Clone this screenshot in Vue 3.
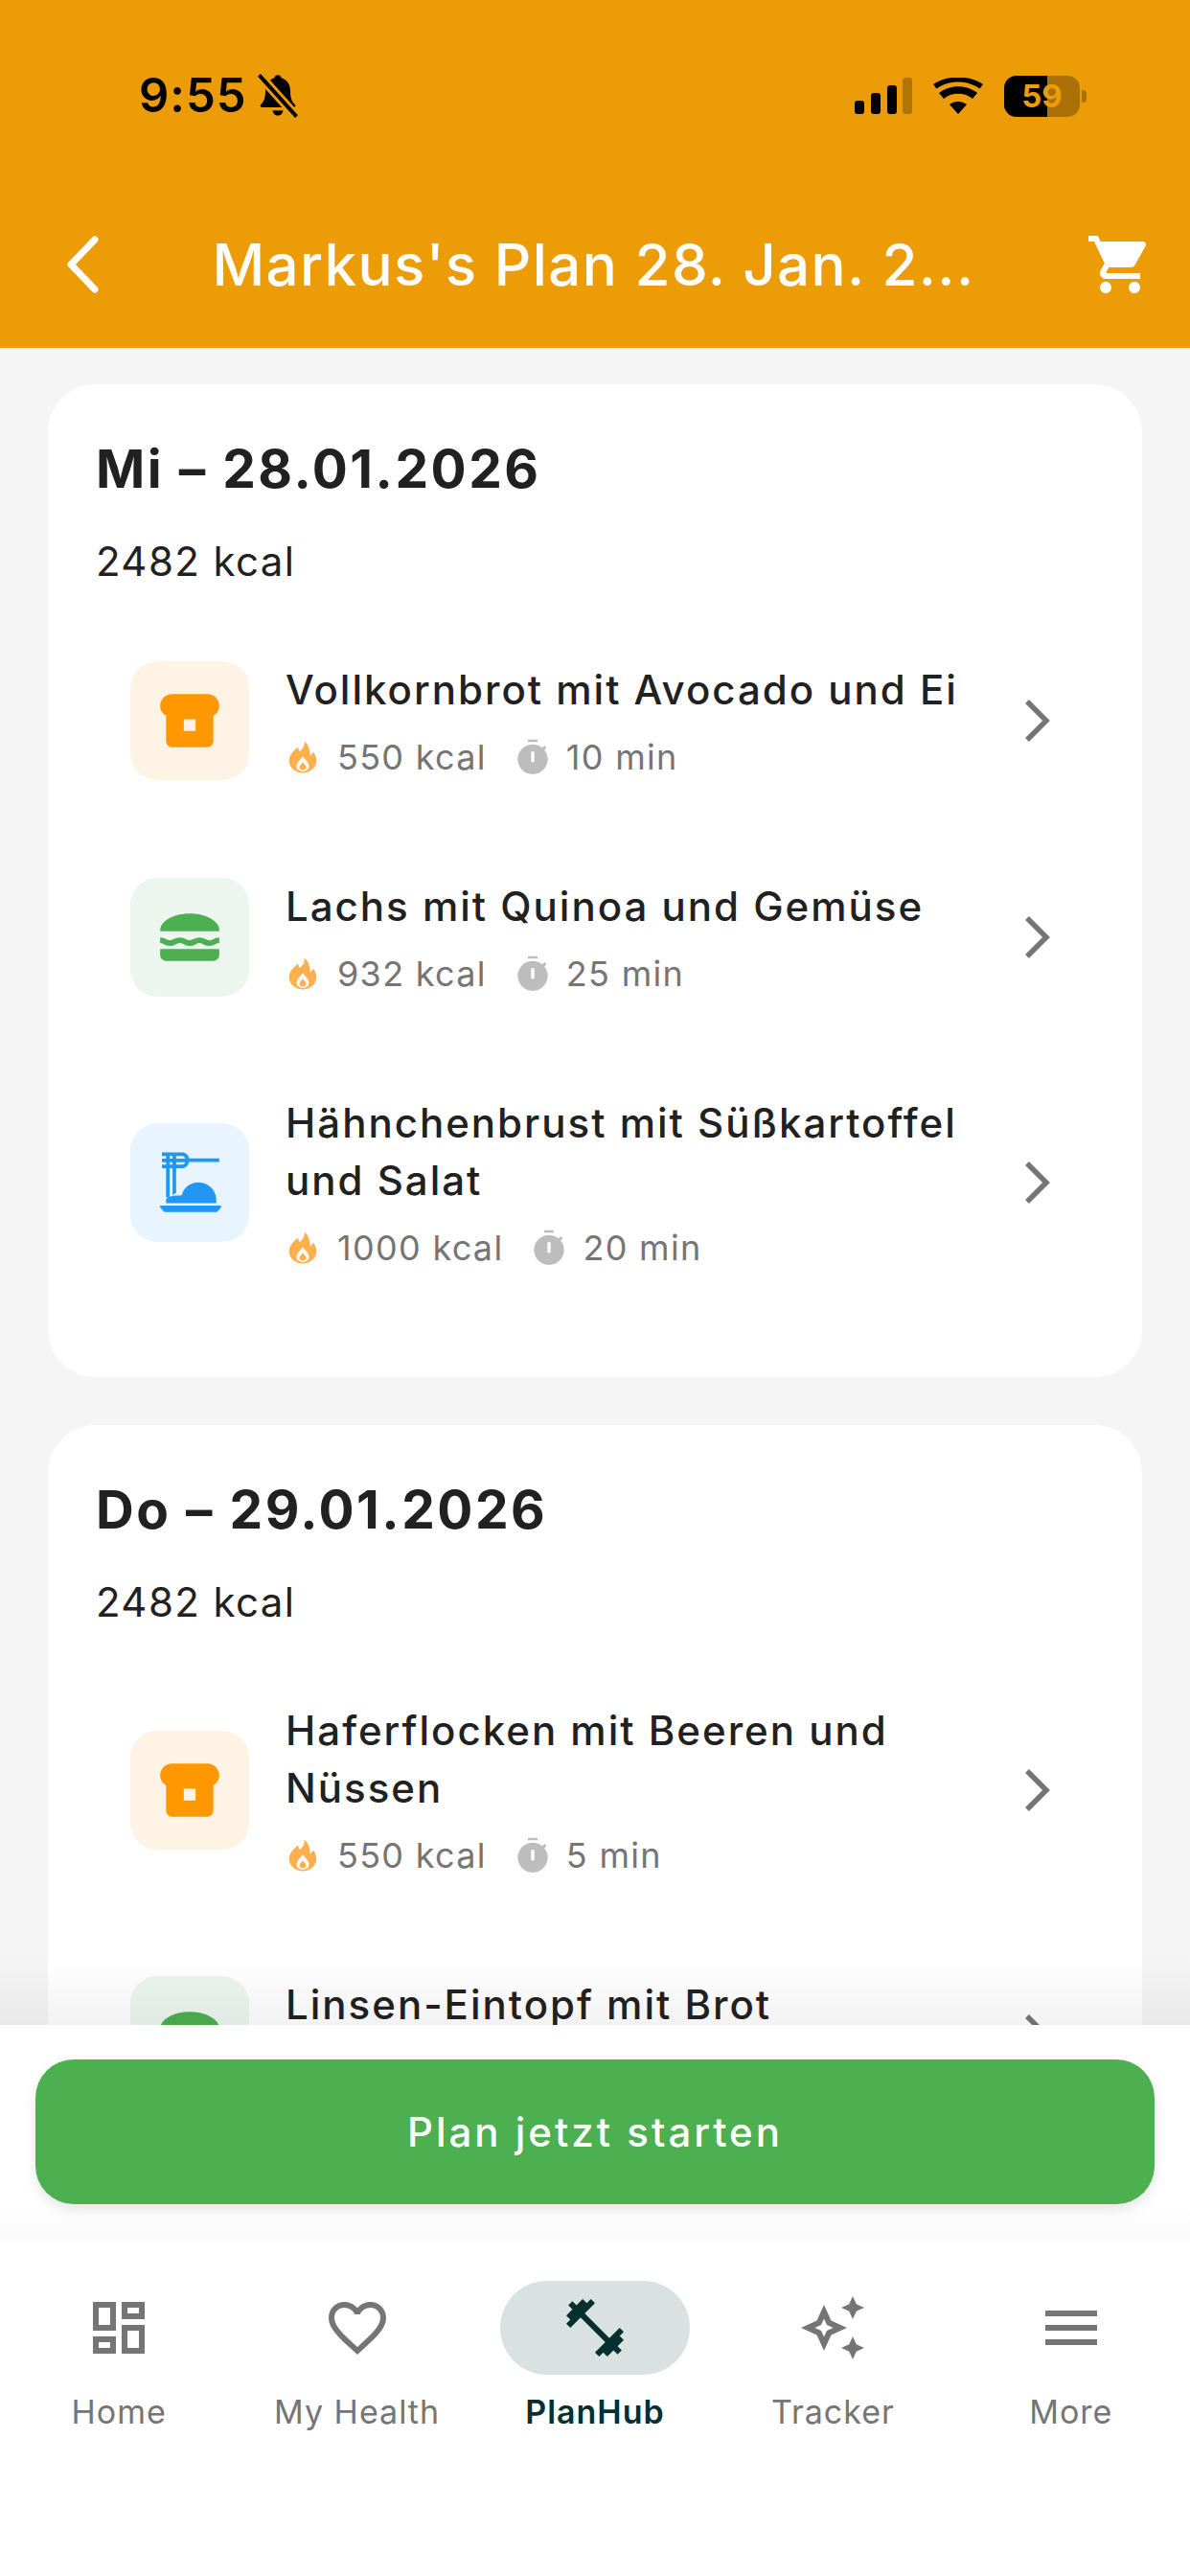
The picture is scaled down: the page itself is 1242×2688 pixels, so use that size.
<template>
  <div class="screen">
    <div class="top-bar">
      <div class="status-bar">
        <div class="status-left">
          <span class="clock">9:55</span>
          <svg class="bell" viewBox="0 0 24 24">
            <path d="M12 2c-.9 0-1.500.6-1.600 1.400C7.600 4.200 6 6.600 6 9.600c0 3.400-.6 5-2.200 6.600-.5.5-.2 1.300.5 1.300h15.400c.7 0 1-.8.5-1.300C18.600 14.600 18 13 18 9.600c0-3-1.600-5.400-4.400-6.200C13.500 2.600 12.900 2 12 2z" />
            <path d="M9.500 19c.2 1.500 1.200 2.500 2.500 2.500s2.300-1 2.500-2.500z" />
            <path class="bell-cut" d="M3 2l18 20" />
            <path class="bell-slash" d="M3 2l18 20" />
          </svg>
        </div>
        <div class="status-right">
          <svg class="signal" viewBox="0 0 60 38">
            <rect x="0" y="24" width="10" height="14" rx="3" />
            <rect x="17" y="16" width="10" height="22" rx="3" />
            <rect x="34" y="8" width="10" height="30" rx="3" />
            <rect class="dim" x="50" y="0" width="10" height="38" rx="3" />
          </svg>
          <svg class="wifi" viewBox="0 0 52 38">
            <path d="M26 38l-9-10c5-4 13-4 18 0z" />
            <path d="M11 21l-5-6c11-9 29-9 40 0l-5 6c-8-7-22-7-30 0z" transform="translate(0 1)" />
            <path d="M3.500 11.500L0 7c14-10 38-10 52 0l-3.500 4.500C36 2 16 2 3.500 11.500z" />
          </svg>
          <div class="battery">
            <div class="battery-level"></div>
            <span class="battery-num">59</span>
            <div class="battery-cap"></div>
          </div>
        </div>
      </div>
      <div class="nav-row">
        <svg class="back" viewBox="0 0 40 64"><path d="M33 6L8 32l25 26" /></svg>
        <span class="page-title">Markus's Plan 28. Jan. 2...</span>
        <svg class="cart" viewBox="0 0 24 24">
          <path d="M7 18c-1.100 0-1.990.9-1.990 2S5.900 22 7 22s2-.9 2-2-.9-2-2-2zM1 2v2h2l3.600 7.590-1.350 2.450c-.16.28-.25.61-.25.96 0 1.100.9 2 2 2h12v-2H7.420c-.14 0-.25-.11-.25-.25l.03-.12.9-1.630h7.450c.75 0 1.410-.41 1.750-1.030l3.580-6.490c.08-.14.12-.31.12-.48 0-.55-.45-1-1-1H5.210l-.94-2H1zm16 16c-1.100 0-1.990.9-1.990 2s.89 2 1.990 2 2-.9 2-2-.9-2-2-2z" />
        </svg>
      </div>
    </div>

    <div class="scroll-area">
      <section v-for="day in days" :key="day.date" class="day-card">
        <h2 class="day-title">{{ day.date }}</h2>
        <p class="day-kcal">{{ day.kcal }} kcal</p>
        <div class="meal-list">
          <div v-for="meal in day.meals" :key="meal.name" class="meal-row">
            <div class="meal-icon" :class="meal.type">
              <svg v-if="meal.type === 'breakfast'" viewBox="0 0 24 24">
                <path fill-rule="evenodd" d="M18 3H6C3.800 3 2 4.800 2 7c0 1.500.8 2.700 2 3.400V19c0 1.100.9 2 2 2h12c1.100 0 2-.9 2-2v-8.600c1.200-.7 2-1.900 2-3.400 0-2.200-1.800-4-4-4zm-4 12.500h-4v-4h4z" />
              </svg>
              <svg v-else-if="meal.type === 'lunch'" viewBox="0 0 24 24">
                <path d="M22 10c.32-3.280-4.280-6-9.990-6C6.300 4 1.700 6.720 2.020 10z" />
                <path class="wave" d="M2 13c1.700 0 1.700 1 3.300 1s1.700-1 3.400-1 1.700 1 3.300 1 1.700-1 3.300-1 1.700 1 3.400 1 1.600-1 3.300-1" />
                <path d="M2 16h20v2c0 1.100-.9 2-2 2H4c-1.100 0-2-.9-2-2z" />
              </svg>
              <svg v-else viewBox="0 0 24 24">
                <path fill-rule="evenodd" d="M2.600 1.800h6.900c1.100 0 2 .8 2.300 2H22V5H11.800c-.3 1.200-1.200 2.100-2.300 2.100H2.600V5.900H4v-.8H2.600V3.900H4V3H2.600zM5.200 3h1v.9h-1zm0 2.100h1v.8h-1zM7.400 3h2c.6 0 1 .4 1 .9h-3zm0 2.100h3c0 .5-.4.8-1 .8h-2z" />
                <path d="M4 7.100h1.200V17H4zM6.200 7.100h1.200v8.400l-1.200.7z" />
                <path d="M4 19v-1.400c.8-.8 2-1.200 3.700-1.200.6 0 1.100 0 1.600-.1.6-2.600 2.900-4.400 5.700-4.400 3.400 0 6 2.700 6 6V19z" />
                <path d="M2 19.800h20.600v.6L21.200 22H3.400L2 20.400z" />
              </svg>
            </div>
            <div class="meal-body">
              <div class="meal-name">{{ meal.name }}</div>
              <div class="meal-meta">
                <svg class="flame" viewBox="0 0 24 24">
                  <path d="M13 1c.6 3.300-1.100 5-3 7-.8-.8-1.200-1.800-1.200-3C5 7.800 2.500 11 2.500 14.500c0 4.800 4.300 8.500 9.500 8.500s9.500-3.700 9.500-8.500c0-2.300-.9-4.400-2.200-6.100-.4 1.200-1.200 2-2.300 2.500C17.300 7.200 16 3.400 13 1z" />
                  <path class="flame-hollow" d="M12 11.500c-2 2.500-4.300 4.600-4.300 6.900 0 2 1.900 3.600 4.300 3.600s4.300-1.600 4.300-3.600c0-2.300-2.300-4.400-4.300-6.900z" />
                  <path d="M12 15.500c-1 1.300-2.300 2.300-2.300 3.500 0 1.200 1 2 2.300 2s2.300-.8 2.300-2c0-1.200-1.300-2.200-2.300-3.500z" />
                </svg>
                <span class="meta-value">{{ meal.kcal }} kcal</span>
                <svg class="stopwatch" viewBox="0 0 24 24">
                  <path fill-rule="evenodd" d="M9 1h6v1.600H9zM12 4c-5.200 0-9.400 4.200-9.400 9.400S6.800 22.800 12 22.800s9.400-4.200 9.400-9.400c0-2.200-.8-4.300-2.100-5.900l1.400-1.400-1.300-1.300-1.400 1.400C16.300 4.800 14.200 4 12 4zm-1 4.500h2v6.600h-2z" />
                </svg>
                <span class="meta-value">{{ meal.minutes }} min</span>
              </div>
            </div>
            <svg class="chevron" viewBox="0 0 30 48"><path d="M5 4l20 20L5 44" /></svg>
          </div>
        </div>
      </section>
    </div>

    <div class="action-bar">
      <button class="start-btn">Plan jetzt starten</button>
    </div>

    <nav class="tab-bar">
      <div v-for="tab in tabs" :key="tab.label" class="tab" :class="{ active: tab.active }">
        <div class="tab-icon">
          <svg viewBox="0 0 24 24"><path :d="tab.icon" /></svg>
        </div>
        <span class="tab-label">{{ tab.label }}</span>
      </div>
    </nav>
  </div>
</template>

<script setup>
const days = [
  {
    date: 'Mi – 28.01.2026',
    kcal: 2482,
    meals: [
      { name: 'Vollkornbrot mit Avocado und Ei', type: 'breakfast', kcal: 550, minutes: 10 },
      { name: 'Lachs mit Quinoa und Gemüse', type: 'lunch', kcal: 932, minutes: 25 },
      { name: 'Hähnchenbrust mit Süßkartoffel und Salat', type: 'dinner', kcal: 1000, minutes: 20 }
    ]
  },
  {
    date: 'Do – 29.01.2026',
    kcal: 2482,
    meals: [
      { name: 'Haferflocken mit Beeren und Nüssen', type: 'breakfast', kcal: 550, minutes: 5 },
      { name: 'Linsen-Eintopf mit Brot', type: 'lunch', kcal: 932, minutes: 25 }
    ]
  }
]

const tabs = [
  {
    label: 'Home',
    icon: 'M19 5v2h-4V5h4M9 5v6H5V5h4m10 8v6h-4v-6h4M9 17v2H5v-2h4M21 3h-8v6h8V3zM11 3H3v10h8V3zm10 8h-8v10h8V11zm-10 4H3v6h8v-6z'
  },
  {
    label: 'My Health',
    icon: 'M16.500 3c-1.740 0-3.410.81-4.500 2.090C10.910 3.810 9.240 3 7.500 3 4.420 3 2 5.420 2 8.500c0 3.780 3.400 6.860 8.550 11.540L12 21.350l1.450-1.320C18.600 15.360 22 12.280 22 8.500 22 5.420 19.580 3 16.500 3zm-4.400 15.550l-.1.1-.1-.1C7.140 14.240 4 11.390 4 8.500 4 6.500 5.500 5 7.500 5c1.540 0 3.040.99 3.570 2.360h1.870C13.460 5.990 14.960 5 16.500 5c2 0 3.500 1.500 3.500 3.500 0 2.890-3.140 5.740-7.900 10.050z'
  },
  {
    label: 'PlanHub',
    active: true,
    icon: 'M20.570 14.860L22 13.430 20.570 12 17 15.570 8.430 7 12 3.430 10.570 2 9.140 3.430 7.710 2 5.570 4.140 4.140 2.710 2.710 4.140l1.430 1.430L2 7.710l1.430 1.430L2 10.570 3.430 12 7 8.430 15.570 17 12 20.570 13.430 22l1.430-1.430L16.290 22l2.140-2.140 1.430 1.430 1.430-1.430-1.430-1.430L22 16.290z'
  },
  {
    label: 'Tracker',
    icon: 'M19 9l1.250-2.750L23 5l-2.750-1.250L19 1l-1.250 2.750L15 5l2.750 1.250L19 9zm-7.500.5L9 4 6.500 9.500 1 12l5.500 2.500L9 20l2.500-5.500L17 12l-5.500-2.500zM9.990 12.990L9 15.170l-.99-2.180L5.830 12l2.180-.99L9 8.830l.99 2.180 2.180.99-2.180.99zM19 15l-1.250 2.750L15 19l2.750 1.250L19 23l1.250-2.750L23 19l-2.750-1.250L19 15z'
  },
  {
    label: 'More',
    icon: 'M3 18h18v-2H3v2zm0-5h18v-2H3v2zm0-7v2h18V6H3z'
  }
]
</script>

<style>
html,
body {
  margin: 0;
  background: #f5f5f5;
}
</style>

<style scoped>
.screen {
  width: 1242px;
  height: 2688px;
  display: flex;
  flex-direction: column;
  overflow: hidden;
  background: #f5f5f5;
  font-family: Inter, "Liberation Sans", sans-serif;
}

.top-bar {
  height: 363px;
  flex: none;
  background: #ec9c07;
}

.status-bar {
  height: 202px;
  box-sizing: border-box;
  padding: 72px 115px 0 145px;
  display: flex;
  justify-content: space-between;
  align-items: flex-start;
}

.status-left {
  display: flex;
  align-items: center;
  gap: 6px;
}

.clock {
  font-size: 49px;
  line-height: 56px;
  font-weight: 600;
  letter-spacing: 1px;
  color: #000;
}

.bell {
  width: 52px;
  height: 52px;
}

.bell path {
  fill: #000;
}

.bell .bell-cut {
  fill: none;
  stroke: #ec9c07;
  stroke-width: 4.5;
}

.bell .bell-slash {
  fill: none;
  stroke: #000;
  stroke-width: 1.8;
}

.status-right {
  display: flex;
  align-items: center;
  gap: 22px;
  height: 56px;
}

.signal {
  width: 60px;
  height: 38px;
  fill: #000;
}

.signal .dim {
  opacity: 0.25;
}

.wifi {
  width: 52px;
  height: 38px;
  fill: #000;
}

.battery {
  position: relative;
  width: 79px;
  height: 43px;
  border-radius: 13px;
  background: rgba(0, 0, 0, 0.28);
}

.battery-level {
  width: 45px;
  height: 43px;
  border-radius: 13px 0 0 13px;
  background: #000;
}

.battery-num {
  position: absolute;
  left: 0;
  right: 0;
  top: 0;
  text-align: center;
  font-size: 33px;
  line-height: 43px;
  font-weight: 700;
  color: #ec9c07;
}

.battery-cap {
  position: absolute;
  right: -7px;
  top: 15px;
  width: 5px;
  height: 13px;
  border-radius: 0 4px 4px 0;
  background: rgba(0, 0, 0, 0.28);
}

.nav-row {
  height: 148px;
  display: flex;
  align-items: center;
  padding: 0 37px 0 66px;
}

.back {
  width: 40px;
  height: 64px;
  flex: none;
}

.back path {
  fill: none;
  stroke: #fff;
  stroke-width: 7;
  stroke-linecap: round;
  stroke-linejoin: round;
}

.page-title {
  flex: 1;
  text-align: center;
  font-size: 60px;
  font-weight: 500;
  letter-spacing: 1.4px;
  color: #fff;
  white-space: nowrap;
}

.cart {
  width: 72px;
  height: 72px;
  fill: #fff;
  flex: none;
}

.scroll-area {
  flex: 1;
  min-height: 0;
  overflow: hidden;
  position: relative;
  box-sizing: border-box;
  padding: 38px 50px 0;
}

/* soft shade where the list runs under the action bar */
.scroll-area::after {
  content: "";
  position: absolute;
  left: 0;
  right: 0;
  bottom: 0;
  height: 70px;
  background: linear-gradient(to bottom, rgba(0, 0, 0, 0), rgba(0, 0, 0, 0.05));
}

.day-card {
  background: #fff;
  border-radius: 50px;
  padding: 50px 50px 60px;
  margin-bottom: 50px;
}

.day-title {
  margin: 0;
  font-size: 55px;
  line-height: 76px;
  font-weight: 700;
  letter-spacing: 2.5px;
  color: #212121;
}

.day-kcal {
  margin: 34px 0 28px;
  font-size: 42px;
  line-height: 50px;
  letter-spacing: 1.4px;
  color: #212121;
}

.meal-row {
  display: flex;
  align-items: center;
  padding: 51px 36px;
}

.meal-icon {
  width: 124px;
  height: 124px;
  flex: none;
  border-radius: 28px;
  display: flex;
  align-items: center;
  justify-content: center;
  margin-right: 38px;
}

.meal-icon svg {
  width: 74px;
  height: 74px;
}

.meal-icon.breakfast {
  background: #fff3e6;
  fill: #ff9800;
}

.meal-icon.lunch {
  background: #edf6ee;
  fill: #4caf50;
}

.meal-icon.dinner {
  background: #e8f4fe;
  fill: #2196f3;
}

.wave {
  fill: none;
  stroke: #4caf50;
  stroke-width: 1.9;
}

.meal-body {
  flex: 1;
  min-width: 0;
}

.meal-name {
  font-size: 42px;
  line-height: 60px;
  font-weight: 500;
  letter-spacing: 2px;
  color: #212121;
}

.meal-meta {
  margin-top: 16px;
  height: 48px;
  display: flex;
  align-items: center;
  font-size: 36px;
  letter-spacing: 1.3px;
  color: #757575;
}

.flame {
  width: 36px;
  height: 36px;
  fill: #ffb04d;
  margin-right: 18px;
  flex: none;
}

.flame .flame-hollow {
  fill: #fff;
}

.stopwatch {
  width: 44px;
  height: 40px;
  fill: #bdbdbd;
  margin: 0 13px 0 26px;
  flex: none;
}

.chevron {
  width: 30px;
  height: 48px;
  flex: none;
  margin: 0 9px 0 40px;
}

.chevron path {
  fill: none;
  stroke: #757575;
  stroke-width: 5.5;
}

.action-bar {
  flex: none;
  height: 224px;
  box-sizing: border-box;
  padding: 36px 37px 0;
  background: linear-gradient(to bottom, #fff 85%, #fafafa);
}

.start-btn {
  width: 100%;
  height: 151px;
  border: none;
  border-radius: 40px;
  background: #4caf50;
  color: #fff;
  font-family: inherit;
  font-size: 42px;
  font-weight: 500;
  letter-spacing: 3px;
  box-shadow: 0 6px 14px rgba(0, 0, 0, 0.1);
}

.tab-bar {
  flex: none;
  height: 351px;
  background: #fff;
  display: flex;
  box-sizing: border-box;
  padding-top: 43px;
}

.tab {
  width: 20%;
  display: flex;
  flex-direction: column;
  align-items: center;
}

.tab-icon {
  width: 198px;
  height: 98px;
  border-radius: 49px;
  display: flex;
  align-items: center;
  justify-content: center;
  fill: #757575;
}

.tab-icon svg {
  width: 72px;
  height: 72px;
}

.tab-label {
  margin-top: 15px;
  font-size: 34px;
  line-height: 48px;
  letter-spacing: 1px;
  color: #757575;
}

.tab.active .tab-icon {
  background: #d9e2e1;
  fill: #05302f;
}

.tab.active .tab-label {
  color: #05302f;
  font-weight: 600;
}
</style>
